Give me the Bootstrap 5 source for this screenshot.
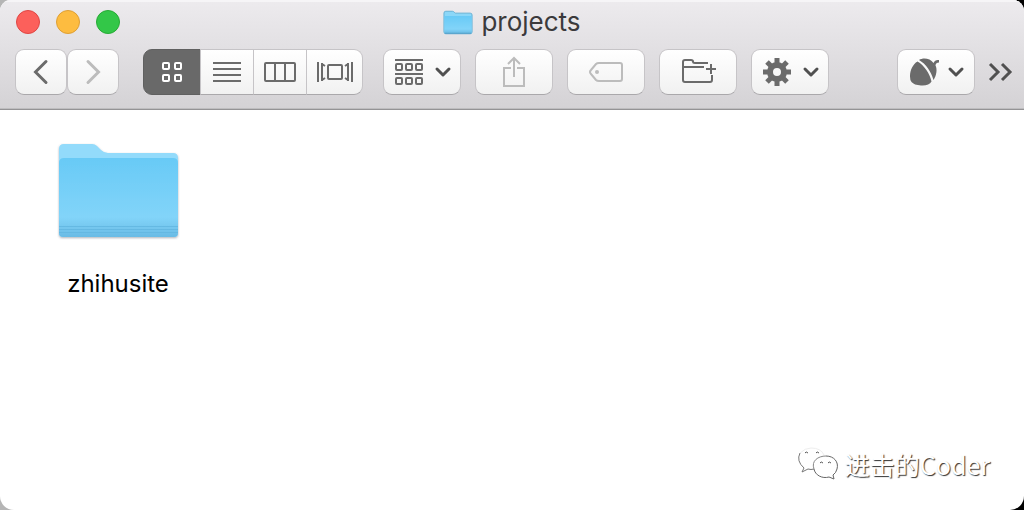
<!DOCTYPE html>
<html lang="zh-CN">
<head>
<meta charset="utf-8">
<meta name="viewport" content="width=device-width, initial-scale=1">
<title>projects</title>
<link href="https://cdn.jsdelivr.net/npm/bootstrap@5.3.0/dist/css/bootstrap.min.css" rel="stylesheet">
<style>
  body { background: linear-gradient(90deg, #b5b5b5 50%, #000 50%); font-family: Inter, "Noto Sans CJK SC", sans-serif; color: #000; }
  .finder { border-radius: 11px 11px 14px 14px; }
  .chrome { background: linear-gradient(#edebee, #d4d2d5); border-bottom: 1px solid #949395; box-shadow: inset 0 2px 0 #f6f5f7, inset 0 -1px 0 #bebdbf; }
  .titlebar { display: grid; grid-template-columns: 1fr auto 1fr; height: 44px; padding: 0 16px; }
  .window-title { font-size: 26px; line-height: 32px; color: #3b3a3c; font-weight: 400; }
  .light { width: 24px; height: 24px; padding: 0; border: 1px solid; border-radius: 50%; }
  .close-light { background: #fc605b; border-color: #df4644; }
  .min-light { background: #fdbc40; border-color: #de9f34; }
  .zoom-light { background: #33c748; border-color: #27aa35; }
  .toolbar { padding: 5px 11px 14px 15px; }
  .tool { --bs-btn-padding-x: 0; --bs-btn-padding-y: 0; width: 78px; height: 46px; display: flex; align-items: center; justify-content: center; border: 1px solid #c6c4c7; border-bottom-color: #aaa8ab; border-radius: 9px; background: linear-gradient(#fff, #f1f1f1); color: #6b6b6b; }
  .tool:hover { background: #f4f4f4; color: #6b6b6b; border-color: #c6c4c7; }
  .tool-row { gap: 14px; }
  .with-menu { gap: 10px; padding-left: 2px; }
  .acorn-menu { gap: 6px; padding-left: 2px; }
  .nav-tool { width: 52px; }
  .views { width: 220px; margin-left: 24px; margin-right: 20px; }
  .views > .tool { flex: 0 0 54px; }
  .views > .tool.chosen { flex-basis: 58px; background: #696969; border-color: #606060; color: #fff; }
  .views > .tool:last-child { flex-grow: 1; }
  .tool.faint { color: #bcbcbc; }
  .tool svg, .more svg { fill: none; stroke: currentColor; stroke-width: 2; display: block; flex: none; }
  .tool svg.chev { stroke: #505050; stroke-width: 3; stroke-linecap: round; stroke-linejoin: round; }
  .more { width: 26px; height: 46px; color: #505050; margin-left: 12px; }
  .files { padding: 32px 18px; }
  .file { width: 200px; padding: 0; color: #000; line-height: 32px; font-size: 24px; }
  .file svg { margin-bottom: 26px; }
  .signature { padding: 0 34px 28px 0; font: 25px/36px "Noto Sans CJK SC", sans-serif; color: #fff; text-shadow: 1px 1px 1px #333; }
</style>
</head>
<body>
<svg width="0" height="0" class="position-absolute" aria-hidden="true">
  <defs>
    <linearGradient id="front" x1="0" y1="0" x2="0" y2="1">
      <stop offset="0" stop-color="#68caf6"/><stop offset=".75" stop-color="#82d4f9"/><stop offset="1" stop-color="#69bbe5"/>
    </linearGradient>
    <filter id="shade" x="-10%" y="-10%" width="120%" height="120%"><feDropShadow dx="0" dy="1" stdDeviation="1" flood-color="#456" flood-opacity=".45"/></filter>
  </defs>
</svg>
<div class="finder bg-white min-vh-100 d-flex flex-column overflow-hidden">
  <header class="chrome">
    <div class="titlebar align-items-center">
      <div class="d-flex gap-3">
        <button class="light close-light" aria-label="Close"></button>
        <button class="light min-light" aria-label="Minimize"></button>
        <button class="light zoom-light" aria-label="Zoom"></button>
      </div>
      <div class="d-flex align-items-center gap-2">
        <svg width="30" height="25" viewBox="0 0 32 26" aria-hidden="true"><path d="M1 23V3q0-2 2-2h7q1 0 2 1l1 1h16q2 0 2 2v18q0 2-2 2H3q-2 0-2-2z" fill="#8bd7f8" stroke="#63afd3"/><path d="M1.500 6h29V23q0 1.500-1.500 1.500H3q-1.500 0-1.500-1.500z" fill="url(#front)"/><path d="M2 24.500h28" stroke="#539fc6"/></svg>
        <h1 class="window-title m-0">projects</h1>
      </div>
      <div></div>
    </div>
    <div class="toolbar d-flex align-items-center">
      <button class="btn tool nav-tool" aria-label="Back"><svg width="16" height="26" viewBox="0 0 16 26"><path d="M13 2.500 2.500 13 13 23.500" stroke-width="3" stroke-linecap="round"/></svg></button>
      <button class="btn tool nav-tool faint" aria-label="Forward"><svg width="16" height="26" viewBox="0 0 16 26"><path d="M3 2.500 13.500 13 3 23.500" stroke-width="3" stroke-linecap="round"/></svg></button>
      <div class="btn-group views" role="group" aria-label="View">
        <button class="btn tool chosen" aria-label="Icons" aria-pressed="true"><svg width="22" height="22" viewBox="0 0 22 22"><rect x="2" y="2" width="6" height="6" rx="1"/><rect x="14" y="2" width="6" height="6" rx="1"/><rect x="2" y="14" width="6" height="6" rx="1"/><rect x="14" y="14" width="6" height="6" rx="1"/></svg></button>
        <button class="btn tool" aria-label="List"><svg width="28" height="20" viewBox="0 0 28 20"><path d="M0 1h28M0 7h28M0 13h28M0 19h28"/></svg></button>
        <button class="btn tool" aria-label="Columns"><svg width="32" height="20" viewBox="0 0 32 20"><rect x="1" y="1" width="30" height="18" rx="1"/><path d="M11 1v18M21 1v18"/></svg></button>
        <button class="btn tool" aria-label="Cover flow"><svg width="36" height="20" viewBox="0 0 36 20"><rect x="11" y="3" width="14" height="14" rx="1"/><path d="M1 0v20M35 0v20M5 1v18M31 1v18M5 2l3 2M5 18l3-2M31 2l-3 2M31 18l-3-2"/></svg></button>
      </div>
      <div class="d-flex tool-row">
        <button class="btn tool with-menu" aria-label="Group items"><svg width="30" height="28" viewBox="0 0 30 28"><path d="M1 2h28M1 16h28"/><g><rect x="2" y="6" width="6" height="6" rx="1"/><rect x="12" y="6" width="6" height="6" rx="1"/><rect x="22" y="6" width="6" height="6" rx="1"/><rect x="2" y="20" width="6" height="6" rx="1"/><rect x="12" y="20" width="6" height="6" rx="1"/><rect x="22" y="20" width="6" height="6" rx="1"/></g></svg><svg class="chev" width="18" height="12" viewBox="0 0 18 12"><path d="m3 3 6 6 6-6"/></svg></button>
        <button class="btn tool faint" aria-label="Share"><svg width="24" height="32" viewBox="0 0 24 32"><path d="M9 12H2v18h20V12h-7M12 21V3M6 8l6-6 6 6"/></svg></button>
        <button class="btn tool faint" aria-label="Tags"><svg width="36" height="22" viewBox="0 0 36 22"><path d="M11 2h21q2 0 2 2v14q0 2-2 2H11q-2 0-3-1l-5-6q-2-2 0-4l5-6q1-1 3-1z"/><circle cx="9" cy="11" r="2" fill="currentColor" stroke="none"/></svg></button>
        <button class="btn tool" aria-label="New folder"><svg width="36" height="28" viewBox="0 0 36 28"><path d="M28 5H15q-2 0-2-1.500Q13 2 11 2H5Q3 2 3 4v18q0 2 2 2h25q2 0 2-2v-5M4 9h20M26 11h10M31 6v10"/></svg></button>
        <button class="btn tool with-menu" aria-label="Actions"><svg width="30" height="30" viewBox="-15 -15 30 30"><circle r="7" stroke-width="6"/><g stroke-width="5"><path d="M0-14v5M0 14V9M-14 0h5M14 0H9M-10-10l4 4M10-10 6-6M-10 10l4-4M10 10 6 6"/></g></svg><svg class="chev" width="18" height="12" viewBox="0 0 18 12"><path d="m3 3 6 6 6-6"/></svg></button>
      </div>
      <button class="btn tool acorn-menu ms-auto" aria-label="Acorn"><svg width="32" height="30" viewBox="0 0 32 30"><g fill="currentColor" stroke="none"><path d="M8.500 4.500C4 7 1 13 1 19.500q0 4 1.500 5.500Q5 28 12 28.500q8 .5 10.500-4C21 17 15 8 8.500 4.500z"/><path d="M10 3c4-2.500 11-2 14.500 3 1-2.500 3-3.500 5.500-3v2.500c-2 0-3.500 1-3.500 3 2 4 1 10-2 14.500C22 14.500 17 7 10 3z"/></g></svg><svg class="chev" width="18" height="12" viewBox="0 0 18 12"><path d="m3 3 6 6 6-6"/></svg></button>
      <button class="btn more p-0 border-0" aria-label="More tools"><svg width="26" height="22" viewBox="0 0 26 22"><path d="m3 3 8 8-8 8M15 3l8 8-8 8" stroke-width="3"/></svg></button>
    </div>
  </header>
  <main class="files flex-grow-1 d-flex flex-wrap align-content-start">
    <button class="btn file border-0 d-flex flex-column align-items-center"><svg width="124" height="100" viewBox="0 0 124 100" aria-hidden="true"><g filter="url(#shade)"><path d="M3 91V7q0-5 5-5h28q3 0 5 2l4 4q3 3 7 3h65q5 0 5 5v75q0 4-4 4H7q-4 0-4-4z" fill="#93dbfb"/><path d="M3 21q0-5 5-5h109q5 0 5 5v70q0 4-4 4H7q-4 0-4-4z" fill="url(#front)"/></g><path d="M3 84.500h119M3 87.500h119M3 90.500h119" stroke="#60b4df" stroke-opacity=".75"/></svg><span>zhihusite</span></button>
  </main>
  <footer class="signature d-flex justify-content-end align-items-center gap-1">
    <svg width="44" height="34" viewBox="0 0 44 34" fill="none" stroke="#777" aria-hidden="true"><path d="M3 6Q-1 14 7 21l-2 4 6-3q3 1 6 0" stroke="#777"/><path d="M3 6Q8 1 14 1q10 0 13 7" stroke="#eee"/><path d="M17 22C14 14 21 9 29 9" stroke="#888"/><path d="M29 9c8 0 13 6 11 13q-1 4-4 6l1 4-5-2c-7 2-14-2-15-8" stroke="#666"/><path d="M8 6q1-2 3 0M19 6q1-2 3 0M23 16q1-2 3 0M31 16q1-2 3 0" stroke="#555"/></svg>
    <span>进击的Coder</span>
  </footer>
</div>
<script src="https://cdn.jsdelivr.net/npm/bootstrap@5.3.0/dist/js/bootstrap.bundle.min.js"></script>
</body>
</html>
